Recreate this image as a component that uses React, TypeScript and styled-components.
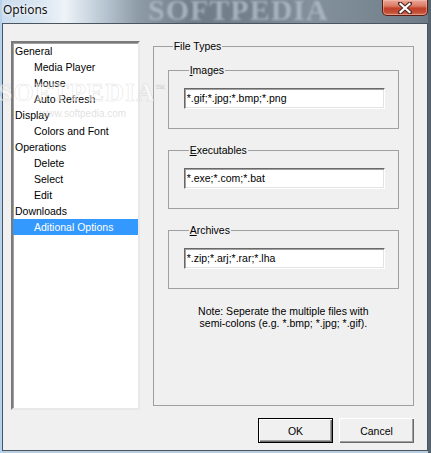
import React from "react";
import styled, { createGlobalStyle } from "styled-components";

const Global = createGlobalStyle`
  html, body { margin: 0; padding: 0; background: #6a7a86; }
  body { font-family: "Liberation Sans", Arial, sans-serif; font-size: 10.5px; }
  * { box-sizing: border-box; }
`;

const Window = styled.div`
  position: relative;
  width: 431px;
  height: 453px;
  overflow: hidden;
  display: flex;
  flex-direction: column;
  background:
    linear-gradient(90deg, #b4d2ee 0 2px, transparent 2px),
    linear-gradient(270deg, #56646d 0 3px, transparent 3px),
    linear-gradient(0deg, #b9cde0 0 3px, transparent 3px),
    linear-gradient(90deg, #c9dcee 0%, #dbe7f2 10%, #eef3f8 15%, #b8c7d3 24%, #8e9ca7 32%, #6f7d88 45%, #74828d 60%, #83919c 72%, #7b8994 84%, #6c7b86 100%);
`;

const TitleBar = styled.div`
  height: 23px;
  flex: none;
  display: flex;
  justify-content: space-between;
  align-items: flex-start;
  position: relative;
  overflow: hidden;
`;

const Title = styled.span`
  font-family: "Noto Sans", "Open Sans", sans-serif;
  font-size: 12px;
  line-height: 16px;
  padding: 2px 0 0 3px;
  color: #111;
  text-shadow: 0 0 6px rgba(255, 255, 255, 0.9), 0 0 3px rgba(255, 255, 255, 0.9);
  position: relative;
  z-index: 1;
`;

const CloseButton = styled.div`
  width: 46px;
  height: 16px;
  margin-right: 3px;
  border: 1px solid #5a1e14;
  border-top: none;
  border-radius: 0 0 5px 5px;
  background: linear-gradient(180deg, #e9a898 0%, #dc7a64 40%, #c4412b 55%, #c24b33 80%, #d4735a 100%);
  box-shadow: inset 0 0 0 1px rgba(255, 200, 190, 0.45);
  display: flex;
  align-items: center;
  justify-content: center;
  position: relative;
  z-index: 1;
`;

const TitleWatermark = styled.span`
  position: absolute;
  left: 148px;
  top: -5px;
  font-family: "Liberation Serif", serif;
  font-weight: bold;
  font-size: 30px;
  line-height: 30px;
  letter-spacing: 1px;
  color: rgba(178, 190, 200, 0.8);
  filter: blur(1.3px);
  pointer-events: none;
`;

const Client = styled.div`
  flex: none;
  height: 428px;
  margin: 0 3px 0 2px;
  border: 1px solid #4a5560;
  background: #f0f0f0;
  display: flex;
  flex-direction: column;
  padding: 16px 13px 0 8px;
`;

const Main = styled.div`
  display: flex;
  align-items: flex-start;
  gap: 13px;
`;

const Tree = styled.ul`
  list-style: none;
  margin: 1px 0 0 0;
  padding: 0;
  width: 129px;
  height: 369px;
  background: #fff;
  border-style: solid;
  border-width: 2px;
  border-color: #7a7a7a #e8e8e8 #e8e8e8 #7a7a7a;
  box-shadow: inset 1px 1px 0 #a0a0a0;
`;

const TreeItem = styled.li<{ $child?: boolean; $selected?: boolean }>`
  height: 16px;
  line-height: 16px;
  font-size: 10.5px;
  padding-left: ${(p) => (p.$child ? 21 : 2)}px;
  color: ${(p) => (p.$selected ? "#fff" : "#000")};
  background: ${(p) => (p.$selected ? "#3399ff" : "transparent")};
  white-space: nowrap;
`;

const Group = styled.fieldset<{ $h: number; $mt?: number }>`
  margin: ${(p) => p.$mt ?? 0}px 0 0 0;
  padding: 11px 15px 0 15px;
  border: 1px solid #a0a0a0;
  height: ${(p) => p.$h}px;
  min-width: 0;
`;

const OuterGroup = styled(Group)`
  width: 262px;
  padding: 11px 14px 0 14px;
`;

const Legend = styled.legend`
  margin-left: 5px;
  padding: 0 1px;
  font-size: 10.5px;
  line-height: 13px;
  color: #000;
`;

const Key = styled.span`
  text-decoration: underline;
`;

const Input = styled.div`
  width: 201px;
  height: 21px;
  background: #fff;
  border-style: solid;
  border-width: 1px;
  border-color: #696969 #ffffff #ffffff #696969;
  box-shadow: inset 1px 1px 0 #a0a0a0, inset -1px -1px 0 #e3e3e3;
  padding: 0 0 0 2px;
  font-size: 10.5px;
  line-height: 18px;
  color: #000;
  white-space: nowrap;
`;

const Note = styled.p`
  margin: 16px 0 0 0;
  text-align: center;
  font-size: 10.5px;
  line-height: 12px;
  color: #000;
`;

const ButtonRow = styled.div`
  display: flex;
  justify-content: flex-end;
  gap: 6px;
  margin-top: 8px;
`;

const Button = styled.button<{ $default?: boolean }>`
  width: 75px;
  height: 25px;
  padding: 0;
  font-family: "Liberation Sans", Arial, sans-serif;
  font-size: 10.5px;
  color: #000;
  background: #f0f0f0;
  border: ${(p) => (p.$default ? "1px solid #000" : "none")};
  box-shadow: inset 1px 1px 0 #fff, inset -1px -1px 0 #696969, inset -2px -2px 0 #a0a0a0;
`;

const Watermark = styled.span<{ $x: number; $y: number; $size: number }>`
  position: absolute;
  left: ${(p) => p.$x}px;
  top: ${(p) => p.$y}px;
  font-size: ${(p) => p.$size}px;
  pointer-events: none;
  white-space: nowrap;
`;

const BigMark = styled(Watermark)`
  font-family: "Liberation Serif", serif;
  font-weight: bold;
  letter-spacing: 1px;
  color: rgba(255, 255, 255, 0.55);
  -webkit-text-stroke: 0.6px rgba(170, 170, 170, 0.35);
`;

const SmallMark = styled(Watermark)`
  color: rgba(185, 185, 185, 0.45);
  font-family: "Liberation Sans", Arial, sans-serif;
`;

const tree: { label: string; child?: boolean }[] = [
  { label: "General" },
  { label: "Media Player", child: true },
  { label: "Mouse", child: true },
  { label: "Auto Refresh", child: true },
  { label: "Display" },
  { label: "Colors and Font", child: true },
  { label: "Operations" },
  { label: "Delete", child: true },
  { label: "Select", child: true },
  { label: "Edit", child: true },
  { label: "Downloads" },
  { label: "Aditional Options", child: true },
];

const CloseX = () => (
  <svg width="14" height="12" viewBox="0 0 14 12">
    <path d="M2 1.5 L12 10.5 M12 1.5 L2 10.5" stroke="#4a2a24" strokeWidth="4.2" strokeLinecap="square" />
    <path d="M2.5 2 L11.5 10 M11.5 2 L2.5 10" stroke="#fff" strokeWidth="2.2" strokeLinecap="square" />
  </svg>
);

export default function App() {
  return (
    <>
      <Global />
      <Window>
        <TitleBar>
          <Title>Options</Title>
          <TitleWatermark>SOFTPEDIA</TitleWatermark>
          <CloseButton>
            <CloseX />
          </CloseButton>
        </TitleBar>
        <Client>
          <Main>
            <Tree>
              {tree.map((t, i) => (
                <TreeItem key={t.label} $child={t.child} $selected={i === tree.length - 1}>
                  {t.label}
                </TreeItem>
              ))}
            </Tree>
            <OuterGroup $h={366}>
              <Legend>File Types</Legend>
              <Group $h={65}>
                <Legend>
                  <Key>I</Key>mages
                </Legend>
                <Input>*.gif;*.jpg;*.bmp;*.png</Input>
              </Group>
              <Group $h={65} $mt={15}>
                <Legend>
                  <Key>E</Key>xecutables
                </Legend>
                <Input>*.exe;*.com;*.bat</Input>
              </Group>
              <Group $h={65} $mt={15}>
                <Legend>
                  <Key>A</Key>rchives
                </Legend>
                <Input>*.zip;*.arj;*.rar;*.lha</Input>
              </Group>
              <Note>
                Note: Seperate the multiple files with
                <br />
                semi-colons (e.g. *.bmp; *.jpg; *.gif).
              </Note>
            </OuterGroup>
          </Main>
          <ButtonRow>
            <Button $default>OK</Button>
            <Button>Cancel</Button>
          </ButtonRow>
        </Client>
        <BigMark $x={-2} $y={78} $size={26}>
          SOFTPEDIA<sup style={{ fontSize: 9 }}>™</sup>
        </BigMark>
        <SmallMark $x={40} $y={108} $size={10}>
          www.softpedia.com
        </SmallMark>
      </Window>
    </>
  );
}
